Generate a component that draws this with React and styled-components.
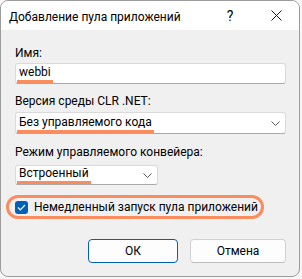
import React from "react";
import styled, { createGlobalStyle } from "styled-components";

const GlobalStyle = createGlobalStyle`
  html, body {
    margin: 0;
    padding: 0;
    background: #f7f7f7;
  }
  body {
    font-family: Roboto, "Noto Sans", sans-serif;
    font-size: 12px;
    color: #000;
  }
`;

const Window = styled.div`
  box-sizing: border-box;
  width: 300px;
  height: 277px;
  border: 1px solid #9c9c9c;
  border-radius: 8px;
  background: #f0f0f0;
  overflow: hidden;
  display: flex;
  flex-direction: column;
`;

const TitleBar = styled.div`
  height: 29px;
  background: #fff;
  display: flex;
  align-items: center;
  padding-left: 8px;
`;

const Title = styled.span`
  flex: 1;
  line-height: 16px;
  margin-top: 2px;
`;

const TitleButton = styled.div`
  width: 46px;
  height: 29px;
  display: flex;
  align-items: center;
  justify-content: center;
  font-size: 14px;
`;

const Content = styled.div`
  padding: 15px 13px 0 14px;
  display: flex;
  flex-direction: column;
`;

const Field = styled.div`
  margin-top: ${(p) => p.$top || 0}px;
  display: flex;
  flex-direction: column;
  align-items: flex-start;
`;

const Label = styled.label`
  line-height: 16px;
  margin-bottom: ${(p) => p.$gap || 2}px;
`;

const Box = styled.div`
  box-sizing: border-box;
  width: ${(p) => p.$width}px;
  height: ${(p) => p.$height}px;
  background: #fff;
  border: 1px solid #dadada;
  border-bottom-color: #a9a9a9;
  border-radius: 3px;
  display: flex;
  align-items: flex-end;
  justify-content: space-between;
  padding-left: 3px;
  padding-right: 5px;
`;

const Marked = styled.span`
  display: inline-block;
  line-height: 16px;
  margin-left: -2px;
  padding: 0 2px;
  border-bottom: 3px solid #fa8c5e;
`;

const Chevron = styled.svg`
  align-self: center;
  flex: none;
`;

const Highlight = styled.div`
  margin: 10px 0 0 -9px;
  align-self: flex-start;
  border: 3px solid #fa8c5e;
  border-radius: 12px;
  height: 18px;
  padding: 0 3px 0 6px;
  display: flex;
  align-items: center;
  gap: 6px;
`;

const CheckBox = styled.span`
  width: 13px;
  height: 13px;
  border-radius: 3px;
  background: #005fb8;
  display: flex;
  align-items: center;
  justify-content: center;
`;

const ButtonRow = styled.div`
  margin-top: 20px;
  display: flex;
  justify-content: flex-end;
  gap: 12px;
`;

const Button = styled.button`
  box-sizing: border-box;
  width: ${(p) => p.$width}px;
  height: 24px;
  background: #fdfdfd;
  border: 1px solid ${(p) => (p.$primary ? "#005fb8" : "#d2d2d2")};
  border-bottom-color: ${(p) => (p.$primary ? "#005fb8" : "#bdbdbd")};
  border-radius: 4px;
  font-family: inherit;
  font-size: 12px;
  color: #000;
  padding: 0;
`;

const ChevronIcon = () => (
  <Chevron width="9" height="5" viewBox="0 0 9 5">
    <path d="M0.5 0.5 L4.5 4.5 L8.5 0.5" fill="none" stroke="#5a5a5a" strokeWidth="1" />
  </Chevron>
);

export default function App() {
  return (
    <>
      <GlobalStyle />
      <Window>
        <TitleBar>
          <Title>Добавление пула приложений</Title>
          <TitleButton>?</TitleButton>
          <TitleButton>
            <svg width="11" height="11" viewBox="0 0 11 11">
              <path d="M0.5 0.5 L10.5 10.5 M10.5 0.5 L0.5 10.5" stroke="#1a1a1a" strokeWidth="1" />
            </svg>
          </TitleButton>
        </TitleBar>
        <Content>
          <Field>
            <Label>Имя:</Label>
            <Box $width={271} $height={21}>
              <Marked>webbi</Marked>
            </Box>
          </Field>
          <Field $top={9}>
            <Label $gap={3}>Версия среды CLR .NET:</Label>
            <Box $width={271} $height={22}>
              <Marked>Без управляемого кода</Marked>
              <ChevronIcon />
            </Box>
          </Field>
          <Field $top={10}>
            <Label $gap={5}>Режим управляемого конвейера:</Label>
            <Box $width={143} $height={20}>
              <Marked>Встроенный</Marked>
              <ChevronIcon />
            </Box>
          </Field>
          <Highlight>
            <CheckBox>
              <svg width="9" height="7" viewBox="0 0 9 7">
                <path d="M1 3.5 L3.3 5.8 L8 1" fill="none" stroke="#fff" strokeWidth="1.2" />
              </svg>
            </CheckBox>
            <span>Немедленный запуск пула приложений</span>
          </Highlight>
          <ButtonRow>
            <Button $primary $width={90}>ОК</Button>
            <Button $width={96}>Отмена</Button>
          </ButtonRow>
        </Content>
      </Window>
    </>
  );
}
